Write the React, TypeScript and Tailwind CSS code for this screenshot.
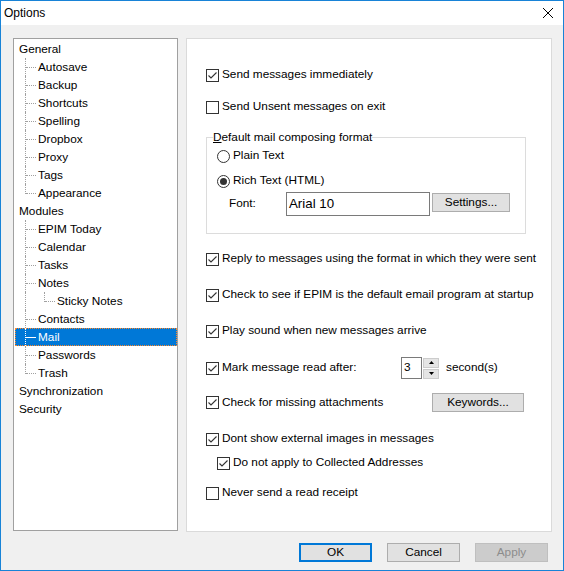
import React from 'react';

type TreeRow = {
    label: string;
    cells: ('tee' | 'end' | 'pass')[];
    selected?: boolean;
};

const treeRows: TreeRow[] = [
    { label: 'General', cells: [] },
    { label: 'Autosave', cells: ['tee'] },
    { label: 'Backup', cells: ['tee'] },
    { label: 'Shortcuts', cells: ['tee'] },
    { label: 'Spelling', cells: ['tee'] },
    { label: 'Dropbox', cells: ['tee'] },
    { label: 'Proxy', cells: ['tee'] },
    { label: 'Tags', cells: ['tee'] },
    { label: 'Appearance', cells: ['end'] },
    { label: 'Modules', cells: [] },
    { label: 'EPIM Today', cells: ['tee'] },
    { label: 'Calendar', cells: ['tee'] },
    { label: 'Tasks', cells: ['tee'] },
    { label: 'Notes', cells: ['tee'] },
    { label: 'Sticky Notes', cells: ['pass', 'end'] },
    { label: 'Contacts', cells: ['tee'] },
    { label: 'Mail', cells: ['tee'], selected: true },
    { label: 'Passwords', cells: ['tee'] },
    { label: 'Trash', cells: ['end'] },
    { label: 'Synchronization', cells: [] },
    { label: 'Security', cells: [] },
];

const Connector: React.FC<{ kind: 'tee' | 'end' | 'pass'; light?: boolean }> = ({ kind, light }) => (
    <span className="relative w-[19px] self-stretch shrink-0">
        <span
            className={`absolute left-[6px] top-0 w-0 border-l border-dotted ${light ? 'border-white' : 'border-[#a0a0a0]'} ${kind === 'end' ? 'h-[10px]' : 'h-full'}`}
        />
        {kind !== 'pass' && (
            <span
                className={`absolute left-[7px] top-[9px] w-[10px] h-0 border-t ${light ? 'border-solid border-white' : 'border-dotted border-[#a0a0a0]'}`}
            />
        )}
    </span>
);

const Check: React.FC<{ checked?: boolean }> = ({ checked }) => (
    <span className="w-[13px] h-[13px] border border-[#333333] bg-white flex items-center justify-center shrink-0">
        {checked && (
            <svg width="11" height="11" viewBox="0 0 11 11">
                <path d="M1.5 5.5 L4 8 L9.5 2.5" fill="none" stroke="#333333" strokeWidth="1.1" />
            </svg>
        )}
    </span>
);

const Radio: React.FC<{ checked?: boolean }> = ({ checked }) => (
    <span className="w-[13px] h-[13px] rounded-full border border-[#333333] bg-white flex items-center justify-center shrink-0">
        {checked && <span className="w-[7px] h-[7px] rounded-full bg-[#333333]" />}
    </span>
);

const CheckLabel: React.FC<{ label: string; checked?: boolean }> = ({ label, checked }) => (
    <span className="flex items-center">
        <Check checked={checked} />
        <span className="ml-[3px] whitespace-nowrap">{label}</span>
    </span>
);

const Button: React.FC<{ label: string; className: string }> = ({ label, className }) => (
    <div className={`flex items-center justify-center border ${className}`}>{label}</div>
);

const Arrow: React.FC<{ up?: boolean }> = ({ up }) => (
    <svg width="5" height="3" viewBox="0 0 5 3">
        <path d={up ? 'M0 3 L2.5 0 L5 3 Z' : 'M0 0 L2.5 3 L5 0 Z'} fill="#000000" />
    </svg>
);

export default function App() {
    return (
        <div className="w-[564px] h-[571px] border border-[#1883d7] flex flex-col font-['Liberation_Sans',Arial,sans-serif] text-[11.8px] text-black">
            <div className="h-[24px] bg-white flex items-center justify-between pl-[3px] pr-[10px]">
                <span className="text-[12px]">Options</span>
                <svg width="10" height="10" viewBox="0 0 10 10">
                    <path d="M0 0 L10 10 M10 0 L0 10" stroke="#000000" strokeWidth="1" />
                </svg>
            </div>

            <div className="flex-1 bg-[#f0f0f0] flex flex-col pt-[13px] pl-[12px]">
                <div className="flex gap-[8px]">
                    <div className="w-[165px] h-[493px] border border-[#a0a0a0] bg-white pt-[1px]">
                        {treeRows.map((row) => (
                            <div key={row.label} className="relative flex h-[18px] items-center pl-[5px]">
                                {row.selected && (
                                    <span className="absolute left-[1px] right-0 top-0 bottom-0 bg-[#0078d7] border border-dotted border-[#ff8728]" />
                                )}
                                {row.cells.map((c, i) => (
                                    <Connector key={i} kind={c} light={row.selected} />
                                ))}
                                <span className={`relative leading-[18px] whitespace-nowrap ${row.selected ? 'text-white' : ''}`}>
                                    {row.label}
                                </span>
                            </div>
                        ))}
                    </div>

                    <div className="w-[366px] h-[494px] border border-[#dadada] bg-white flex flex-col pl-[19px]">
                        <div className="flex items-center h-[20px] mt-[26px]">
                            <CheckLabel label="Send messages immediately" checked />
                        </div>
                        <div className="flex items-center h-[20px] mt-[12px]">
                            <CheckLabel label="Send Unsent messages on exit" />
                        </div>

                        <fieldset className="w-[320px] mt-[12px] border border-[#dcdcdc] pb-[17px]">
                            <legend className="ml-[6px] leading-[16px]">
                                <span className="underline">D</span>efault mail composing format
                            </legend>
                            <div className="flex items-center h-[20px] mt-[1px] pl-[10px]">
                                <Radio />
                                <span className="ml-[3px]">Plain Text</span>
                            </div>
                            <div className="flex items-center h-[20px] mt-[5px] pl-[10px]">
                                <Radio checked />
                                <span className="ml-[3px]">Rich Text (HTML)</span>
                            </div>
                            <div className="flex items-start mt-[1px] pl-[22px]">
                                <span className="w-[57px] h-[24px] flex items-center">Font:</span>
                                <div className="w-[144px] h-[24px] border border-[#7a7a7a] bg-white flex items-center pl-[2px] text-[13.3px]">
                                    Arial 10
                                </div>
                                <Button label="Settings..." className="ml-[2px] mt-[1px] w-[78px] h-[19px] bg-[#e1e1e1] border-[#adadad]" />
                            </div>
                        </fieldset>

                        <div className="flex items-center h-[20px] mt-[15px]">
                            <CheckLabel label="Reply to messages using the format in which they were sent" checked />
                        </div>
                        <div className="flex items-center h-[20px] mt-[16px]">
                            <CheckLabel label="Check to see if EPIM is the default email program at startup" checked />
                        </div>
                        <div className="flex items-center h-[20px] mt-[16px]">
                            <CheckLabel label="Play sound when new messages arrive" checked />
                        </div>
                        <div className="flex items-center h-[22px] mt-[16px]">
                            <div className="w-[195px] flex items-center">
                                <CheckLabel label="Mark message read after:" checked />
                            </div>
                            <div className="w-[21px] h-[22px] border border-[#7a7a7a] bg-white flex items-center pl-[2px]">3</div>
                            <div className="ml-[1px] w-[16px] h-[21px] flex flex-col gap-[1px]">
                                <div className="h-[10px] bg-[#e5e5e5] border border-[#cccccc] flex items-center justify-center">
                                    <Arrow up />
                                </div>
                                <div className="h-[10px] bg-[#e5e5e5] border border-[#cccccc] flex items-center justify-center">
                                    <Arrow />
                                </div>
                            </div>
                            <span className="ml-[7px]">second(s)</span>
                        </div>
                        <div className="flex items-center h-[19px] mt-[14px]">
                            <div className="w-[226px] flex items-center">
                                <CheckLabel label="Check for missing attachments" checked />
                            </div>
                            <Button label="Keywords..." className="w-[92px] h-[19px] bg-[#e1e1e1] border-[#adadad]" />
                        </div>
                        <div className="flex items-center h-[20px] mt-[17px]">
                            <CheckLabel label="Dont show external images in messages" checked />
                        </div>
                        <div className="flex items-center h-[20px] mt-[4px] pl-[11px]">
                            <CheckLabel label="Do not apply to Collected Addresses" checked />
                        </div>
                        <div className="flex items-center h-[20px] mt-[10px]">
                            <CheckLabel label="Never send a read receipt" />
                        </div>
                    </div>
                </div>

                <div className="flex justify-end gap-[15px] mt-[11px] pr-[15px]">
                    <Button label="OK" className="w-[73px] h-[19px] bg-[#e1e1e1] border-2 border-[#0078d7]" />
                    <Button label="Cancel" className="w-[73px] h-[19px] bg-[#e1e1e1] border-[#adadad]" />
                    <Button label="Apply" className="w-[73px] h-[19px] bg-[#cccccc] border-[#bfbfbf] text-[#8c8c8c]" />
                </div>
            </div>
        </div>
    );
}
